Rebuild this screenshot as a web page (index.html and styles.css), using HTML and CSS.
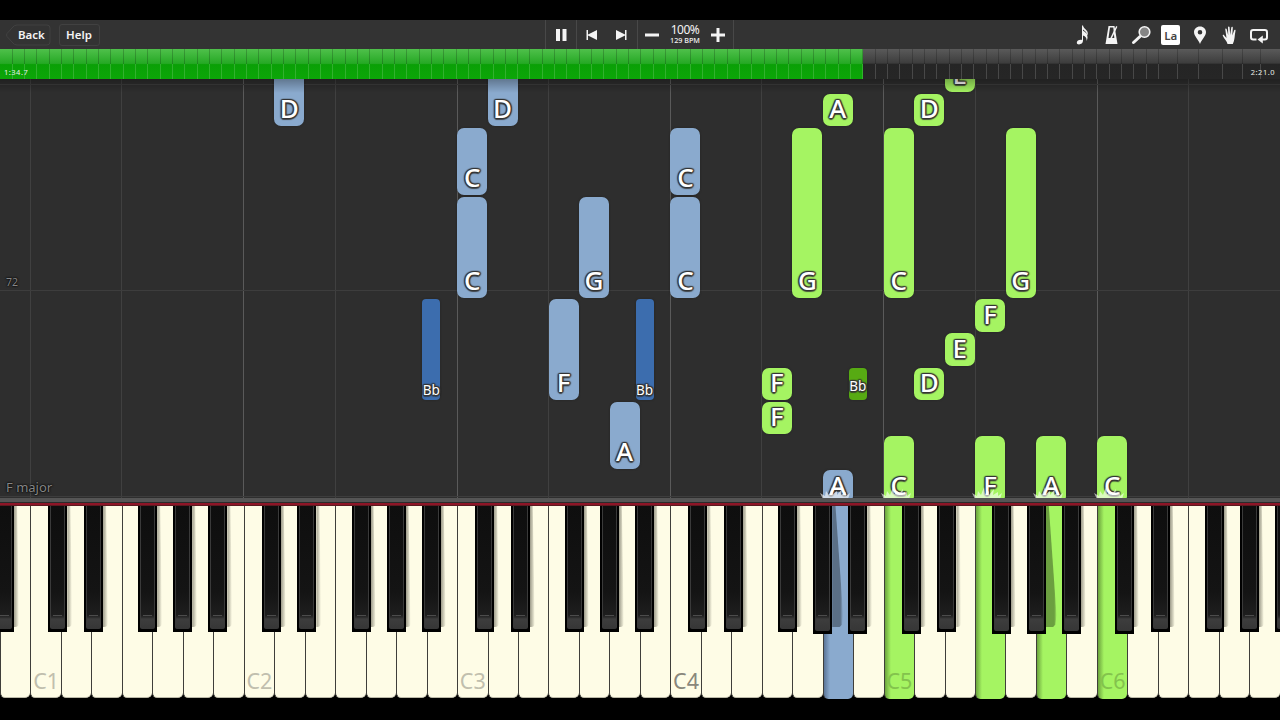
FILE: index.html
```html
<!DOCTYPE html>
<html lang="en">
<head>
<meta charset="UTF-8">
<meta name="viewport" content="width=device-width, initial-scale=1.0">
<title>Piano Practice</title>
<link rel="stylesheet" href="styles.css">
</head>
<body>

<div class="player">
  <header class="toolbar">
    <div class="nav">
      <div class="back">
        <svg width="46" height="22" viewBox="0 0 46 22"><path d="M12 1H42Q45 1 45 4V18Q45 21 42 21H12Q9 21 7 18L2 12.500Q1 11 2 9.500L7 4Q9 1 12 1Z"/></svg>
        <span>Back</span>
      </div>
      <div class="help">Help</div>
    </div>

    <div class="transport">
      <div class="group pause">
        <svg width="12" height="14" viewBox="0 0 12 14"><path d="M1 1h4v12H1zM7.500 1h4v12h-4z"/></svg>
      </div>
      <div class="group skip">
        <svg width="12" height="12" viewBox="0 0 12 12"><path d="M.5 1h1.500v4.500L11 1v10L2 6.500V11H.5z"/></svg>
        <svg width="12" height="12" viewBox="0 0 12 12"><path d="M11.500 1H10v4.500L1 1v10l9-4.500V11h1.500z"/></svg>
      </div>
      <div class="group speed">
        <svg width="14" height="14" viewBox="0 0 14 14"><path d="M0 5.500h14v3H0z"/></svg>
        <div class="tempo"><b>100%</b><small>129 BPM</small></div>
        <svg width="14" height="14" viewBox="0 0 14 14"><path d="M5.500 0h3v5.500H14v3H8.500V14h-3V8.500H0v-3h5.500z"/></svg>
      </div>
    </div>

    <div class="tools">
      <!-- note -->
      <svg width="20" height="22" viewBox="0 0 20 22"><path d="M9 1.500h1c.3 3.200 4.800 4.300 4.800 7.800 0 1-.3 1.700-.6 2.300.7 1.900.3 3.700-.7 5.400.5-3-1-4.400-3.500-5.400v5.200c0 2.200-2 3.600-4 3.600-1.300 0-2.200-.7-2.200-1.700 0-1.800 2.100-3.200 5.200-2.800zM10 5.500v1.200c2 .9 3 2 3.700 3.400.1-2.200-2.200-3-3.700-4.600z"/></svg>
      <!-- metronome -->
      <svg width="20" height="22" viewBox="0 0 20 22"><path fill-rule="evenodd" d="M6.500 2h6l3 18H3.500zM8 3.500L6.500 14h5.800L11.300 3.500z"/><path d="M14.200 2l1.200.7-5.700 12-1.600-.3z"/></svg>
      <!-- magnifier -->
      <svg width="20" height="22" viewBox="0 0 20 22"><path d="M9 12.500l-6.500 6" stroke="#f4f4f4" stroke-width="3" stroke-linecap="round"/><circle cx="13.500" cy="8" r="5.300" fill="#858585" stroke="#f4f4f4" stroke-width="1.600"/></svg>
      <div class="la">La</div>
      <!-- pin -->
      <svg width="20" height="22" viewBox="0 0 20 22"><path fill-rule="evenodd" d="M10 2.500c3.600 0 6 2.500 6 5.600 0 4-4.200 7.400-6 11.900-1.800-4.500-6-7.900-6-11.900C4 5 6.400 2.500 10 2.500zm0 3.400a2.300 2.300 0 1 0 0 4.600 2.300 2.300 0 0 0 0-4.600z"/></svg>
      <!-- hand -->
      <svg width="20" height="22" viewBox="0 0 20 22"><path d="M7.500 20c-.3-2.500-3.500-5.500-4.700-8.300-.3-.9.700-1.200 1.300-.5L6.500 14 5.300 5.500c-.2-1.100 1.100-1.400 1.400-.3l1.500 6L8 3.300c0-1.200 1.500-1.200 1.600 0l.6 7.600 1.100-7.300c.2-1.200 1.600-1 1.500.2l-.5 7.800 1.900-5.300c.4-1 1.600-.6 1.300.5-1 4.600-.6 9.700-2.700 13.200z"/></svg>
      <!-- loop -->
      <svg width="20" height="22" viewBox="0 0 20 22"><path d="M7.500 15.500H4.200Q2 15.500 2 13.300V8.200Q2 6 4.200 6h11.600Q18 6 18 8.200v5.100q0 2.200-2.200 2.200H13" fill="none" stroke="#f4f4f4" stroke-width="2"/><path d="M13.800 11.500v8L8.500 15.500z"/></svg>
    </div>
  </header>

  <div class="progress">
    <div class="played"></div>
    <svg class="ticks" width="1280" height="30"></svg>
    <div class="times"><span>1:34.7</span><span>2:21.0</span></div>
  </div>

  <main class="field">
    <span class="bar-number">72</span>
    <span class="key-name">F major</span>
  </main>

  <div class="rail"></div>
  <div class="keyboard"></div>
</div>

<script>
  const KEY = 1280 / 42;
  const FIELD_TOP = 79;
  const names = ['B', 'C', 'D', 'E', 'F', 'G', 'A'];
  // left edge of each black key, measured from the C of its octave
  const blackOffsets = [17.900, 53.600, 107.700, 142.700, 177.900];

  // [hand, white key index, top, bottom, sounding now]
  const notes = [
    ['left', 9, 60, 126], ['left', 16, 60, 126],
    ['left', 15, 128, 195], ['left', 15, 196.5, 297.5],
    ['left', 19, 196.5, 297.5],
    ['left', 22, 128, 195], ['left', 22, 196.5, 297.5],
    ['left', 18, 299, 400], ['left', 20, 402, 468.5],
    ['left', 27, 470, 503, true],
    ['right', 27, 94, 126], ['right', 30, 94, 126], ['right', 31, 60, 92],
    ['right', 26, 128, 297.5], ['right', 29, 128, 297.5], ['right', 33, 128, 297.5],
    ['right', 32, 299, 332], ['right', 31, 333, 366],
    ['right', 30, 367.5, 400], ['right', 25, 367.5, 400], ['right', 25, 402, 434],
    ['right', 29, 436, 503, true], ['right', 32, 436, 503, true],
    ['right', 34, 436, 503, true], ['right', 36, 436, 503, true]
  ];
  // [hand, octave, top, bottom]
  const flats = [
    ['left', 1, 298.5, 400], ['left', 2, 298.5, 400], ['right', 3, 367.5, 400]
  ];

  const field = document.querySelector('.field');
  const keyboard = document.querySelector('.keyboard');
  const pressed = {};

  function add(parent, className, style, text) {
    const el = document.createElement('div');
    el.className = className;
    Object.assign(el.style, style);
    if (text) el.innerHTML = text;
    parent.appendChild(el);
    return el;
  }

  // Measures in the song, the last ones get slower
  const ticks = [];
  for (let i = 1; i < 95; i++) ticks.push(i * 12.325);
  ticks.push(1177, 1198, 1222, 1242, 1260);
  document.querySelector('.ticks').innerHTML = ticks.map(x =>
    `<path class="dark" d="M${Math.floor(x)}.5 0v15"/><path class="light" d="M${Math.floor(x)}.5 15v15"/>`
  ).join('');

  // Octave and half-octave guides
  for (let i = 1; i < 42; i += 7) {
    add(field, 'lane' + (i > 1 ? ' octave' : ''), { left: Math.floor(i * KEY) - 0.5 + 'px' });
    add(field, 'lane', { left: Math.floor((i + 3) * KEY) - 0.5 + 'px' });
  }
  [84, 290, 496].forEach(y => add(field, 'measure', { top: y - FIELD_TOP + 'px' }));

  const spark = '<svg class="spark" width="34" height="18" viewBox="0 0 34 18">' +
    '<path d="M3 18L0 12l5 3 1-5 3 4 3-8 1 7 4-3 0 4 5-6-1 6 5-3 0 4 4-3-2 6z"/></svg>';

  notes.forEach(([hand, index, top, bottom, active]) => {
    if (active) pressed[index] = hand;
    add(field, 'note ' + hand, {
      left: index * KEY + 'px',
      top: top - FIELD_TOP + 'px',
      height: bottom - top + 'px'
    }, `<span>${names[index % 7]}</span>` + (active ? spark : ''));
  });

  flats.forEach(([hand, octave, top, bottom]) => {
    add(field, 'note flat ' + hand + (bottom - top < 40 ? ' short' : ''), {
      left: (1 + octave * 7) * KEY + 178.400 + 'px',
      top: top - FIELD_TOP + 'px',
      height: bottom - top + 'px'
    }, '<span>Bb</span>');
  });

  for (let i = 0; i < 42; i++) {
    const octave = (i + 6) / 7;
    const label = i % 7 === 1 ? `<span class="${octave === 4 ? 'middle' : ''}">C${octave}</span>` : '';
    add(keyboard, 'white ' + (pressed[i] ? 'down ' + pressed[i] : ''), {}, label);
  }

  for (let octave = -1; octave < 6; octave++) {
    blackOffsets.forEach((offset, n) => {
      const x = (1 + octave * 7) * KEY + offset;
      if (x < -20 || x > 1280) return;
      const next = 1 + octave * 7 + [1, 2, 4, 5, 6][n];
      const deep = pressed[next] || pressed[next - 1];
      add(keyboard, 'black' + (deep ? ' deep' : '') + (pressed[next] ? ' cast' : ''), { left: x + 'px' }, '<i></i>');
    });
  }
</script>

</body>
</html>
```
FILE: styles.css
```css
* {
  box-sizing: border-box;
}

body {
  margin: 0;
  background: #000;
  font-family: "Noto Sans", "Open Sans", sans-serif;
  overflow: hidden;
}

.player {
  width: 1280px;
  height: 720px;
  padding-top: 20px;
  display: flex;
  flex-direction: column;
}

/* Toolbar */

.toolbar {
  height: 29px;
  display: grid;
  grid-template-columns: 545px 189px 1fr;
  align-items: center;
  background: #333;
  color: #f4f4f4;
}

.toolbar svg {
  fill: #f4f4f4;
  display: block;
}

.nav {
  display: flex;
  gap: 8px;
  padding-left: 5px;
  font-size: 11.5px;
  font-weight: 600;
  line-height: 22px;
}

.back {
  display: grid;
}

.back svg,
.back span {
  grid-area: 1 / 1;
}

.back svg {
  fill: none;
  stroke: #414141;
}

.back span {
  padding-left: 13px;
}

.help {
  width: 41px;
  height: 22px;
  padding-right: 1px;
  line-height: 20px;
  border: 1px solid #414141;
  border-radius: 3px;
  text-align: center;
}

.transport {
  display: flex;
  height: 29px;
  border-right: 1px solid #484848;
}

.group {
  display: flex;
  align-items: center;
  border-left: 1px solid #484848;
}

.pause {
  width: 31px;
  padding-left: 9px;
}

.skip {
  width: 61px;
  padding-left: 9px;
  gap: 17px;
}

.speed {
  flex: 1;
  padding-left: 7px;
}

.tempo {
  width: 38px;
  margin: 0 7px 0 7px;
  text-align: center;
}

.tempo b,
.tempo small {
  display: block;
  white-space: nowrap;
}

.tempo b {
  font-size: 12px;
  font-weight: 400;
  line-height: 12px;
  letter-spacing: -0.5px;
}

.tempo small {
  font-size: 7.2px;
  font-weight: 500;
  line-height: 9px;
}

.tools {
  justify-self: end;
  display: flex;
  align-items: center;
  gap: 9.400px;
  padding-right: 11px;
}

.la {
  width: 19px;
  height: 20px;
  margin: 0 0.5px;
  border-radius: 2px;
  background: #fff;
  color: #444;
  font-size: 11.5px;
  font-weight: 600;
  line-height: 22px;
  text-align: center;
}

/* Song position */

.progress {
  height: 30px;
  display: grid;
  background: linear-gradient(#5a5a5a, #3c3c3c 48%, #252525 49%, #262626);
}

.played,
.ticks,
.times {
  grid-area: 1 / 1;
}

.played {
  width: 863px;
  background: linear-gradient(#4fc04b, #26a925 48%, #0aa006 52%, #0ca608);
}

.ticks .dark {
  stroke: rgba(0, 0, 0, 0.200);
}

.ticks .light {
  stroke: rgba(255, 255, 255, 0.160);
}

.times {
  display: flex;
  justify-content: space-between;
  align-items: flex-end;
  padding: 0 5px 1px 4px;
  color: #e8f0e8;
  font-size: 7.5px;
  line-height: 11px;
  letter-spacing: 0.500px;
}

/* Falling notes */

.field {
  position: relative;
  height: 419px;
  overflow: hidden;
  background: #2e2e2e;
}

/* shade below the progress bar */
.field::after {
  content: "";
  position: absolute;
  top: 0;
  left: 0;
  width: 100%;
  height: 14px;
  background: linear-gradient(rgba(0, 0, 0, 0.300), transparent);
}

.lane {
  position: absolute;
  top: 0;
  width: 1px;
  height: 100%;
  background: #404040;
}

.octave {
  background: #5a5a5a;
}

.measure {
  position: absolute;
  left: 0;
  width: 100%;
  height: 1px;
  background: #3d3d3d;
}

.bar-number,
.key-name {
  position: absolute;
  left: 6px;
  z-index: 1;
  color: #858585;
  text-shadow: 0 0 2px #000, 0 0 2px #000;
}

.bar-number {
  top: 195px;
  font-size: 10.5px;
  line-height: 16px;
}

.key-name {
  bottom: 1px;
  font-size: 13px;
  line-height: 20px;
}

.note {
  position: absolute;
  width: 30px;
  border-radius: 7px;
  display: flex;
  justify-content: center;
  align-items: flex-end;
  box-shadow: 0 0 2px #222;
}

.note span {
  color: #fff;
  font-size: 26px;
  font-weight: 500;
  line-height: 26px;
  padding-bottom: 5px;
  text-shadow: 1.5px 0 1px #333c, -1.5px 0 1px #333c, 0 1.5px 1px #333c, 0 -1.5px 1px #333c,
    1px 1px 1px #333c, -1px -1px 1px #333c, 1px -1px 1px #333c, -1px 1px 1px #333c;
}

.left {
  background: #8aaace;
}

.right {
  background: #a5f462;
}

.flat {
  width: 18px;
  border-radius: 4px;
}

.flat span {
  font-size: 13.5px;
  font-weight: 400;
  line-height: 16px;
  padding-bottom: 2px;
}

.flat.short span {
  padding-bottom: 6px;
}

.flat.left {
  background: #3c6dae;
}

.flat.right {
  background: #57aa13;
}

.spark {
  position: absolute;
  left: -3px;
  bottom: 4px;
  fill: #fff;
  opacity: 0.6;
}

.rail {
  height: 8px;
  background: linear-gradient(#555 0 4px, #2b2b2b 4px 5px, #8e1527 5px 7px, #5d1a20 7px);
}

/* Keyboard */

.keyboard {
  position: relative;
  height: 193px;
  display: flex;
  overflow: hidden;
}

.white {
  flex: 1;
  height: 192px;
  display: flex;
  align-items: flex-end;
  justify-content: center;
  border-left: 1px solid #3f3e3a;
  border-bottom: 1px solid #bbb9a8;
  border-radius: 0 0 5px 5px;
  background: #fefce6;
}

.white span {
  color: #c1bfae;
  font-size: 21.5px;
  line-height: 32px;
}

.white .middle {
  color: #89877c;
}

.down {
  height: 193px;
  border-bottom: 0;
}

.down.left {
  background: linear-gradient(90deg, #5c7698, #8aaace 6px);
}

.down.right {
  background: linear-gradient(90deg, #6ca33d, #a5f462 6px);
}

.down span {
  padding-bottom: 2px;
  color: #83c34d;
}

.black {
  position: absolute;
  top: 0;
  width: 19px;
  height: 126px;
  padding: 0 2px 3px;
  background: #000;
}

.black i {
  position: relative;
  display: block;
  height: 100%;
  border: solid #3a3a3a;
  border-width: 0 1px;
  border-radius: 0 0 2px 2px;
  background:
    linear-gradient(#4c4c4c, #4c4c4c) 50% 109px / 9px 1px no-repeat,
    linear-gradient(#0e0e0e, #141414 70%, #1e1e1e 109px, #292929 111px, #3d3d3d 113px, #363636);
}

/* soft shade on the keys to the right */
.black::before {
  content: "";
  position: absolute;
  left: 19px;
  top: 0;
  width: 5px;
  height: 121px;
  border-radius: 0 0 4px 0;
  background: linear-gradient(90deg, rgba(60, 58, 45, 0.500), transparent);
  clip-path: polygon(0 0, 60% 0, 100% 100%, 0 100%);
}

.deep {
  height: 128px;
}

.cast::before {
  width: 11px;
  background: linear-gradient(90deg, rgba(0, 0, 0, 0.350) 75%, transparent);
  clip-path: polygon(0 0, 30% 0, 100% 90%, 90% 98%, 70% 100%, 0 100%);
}
```
